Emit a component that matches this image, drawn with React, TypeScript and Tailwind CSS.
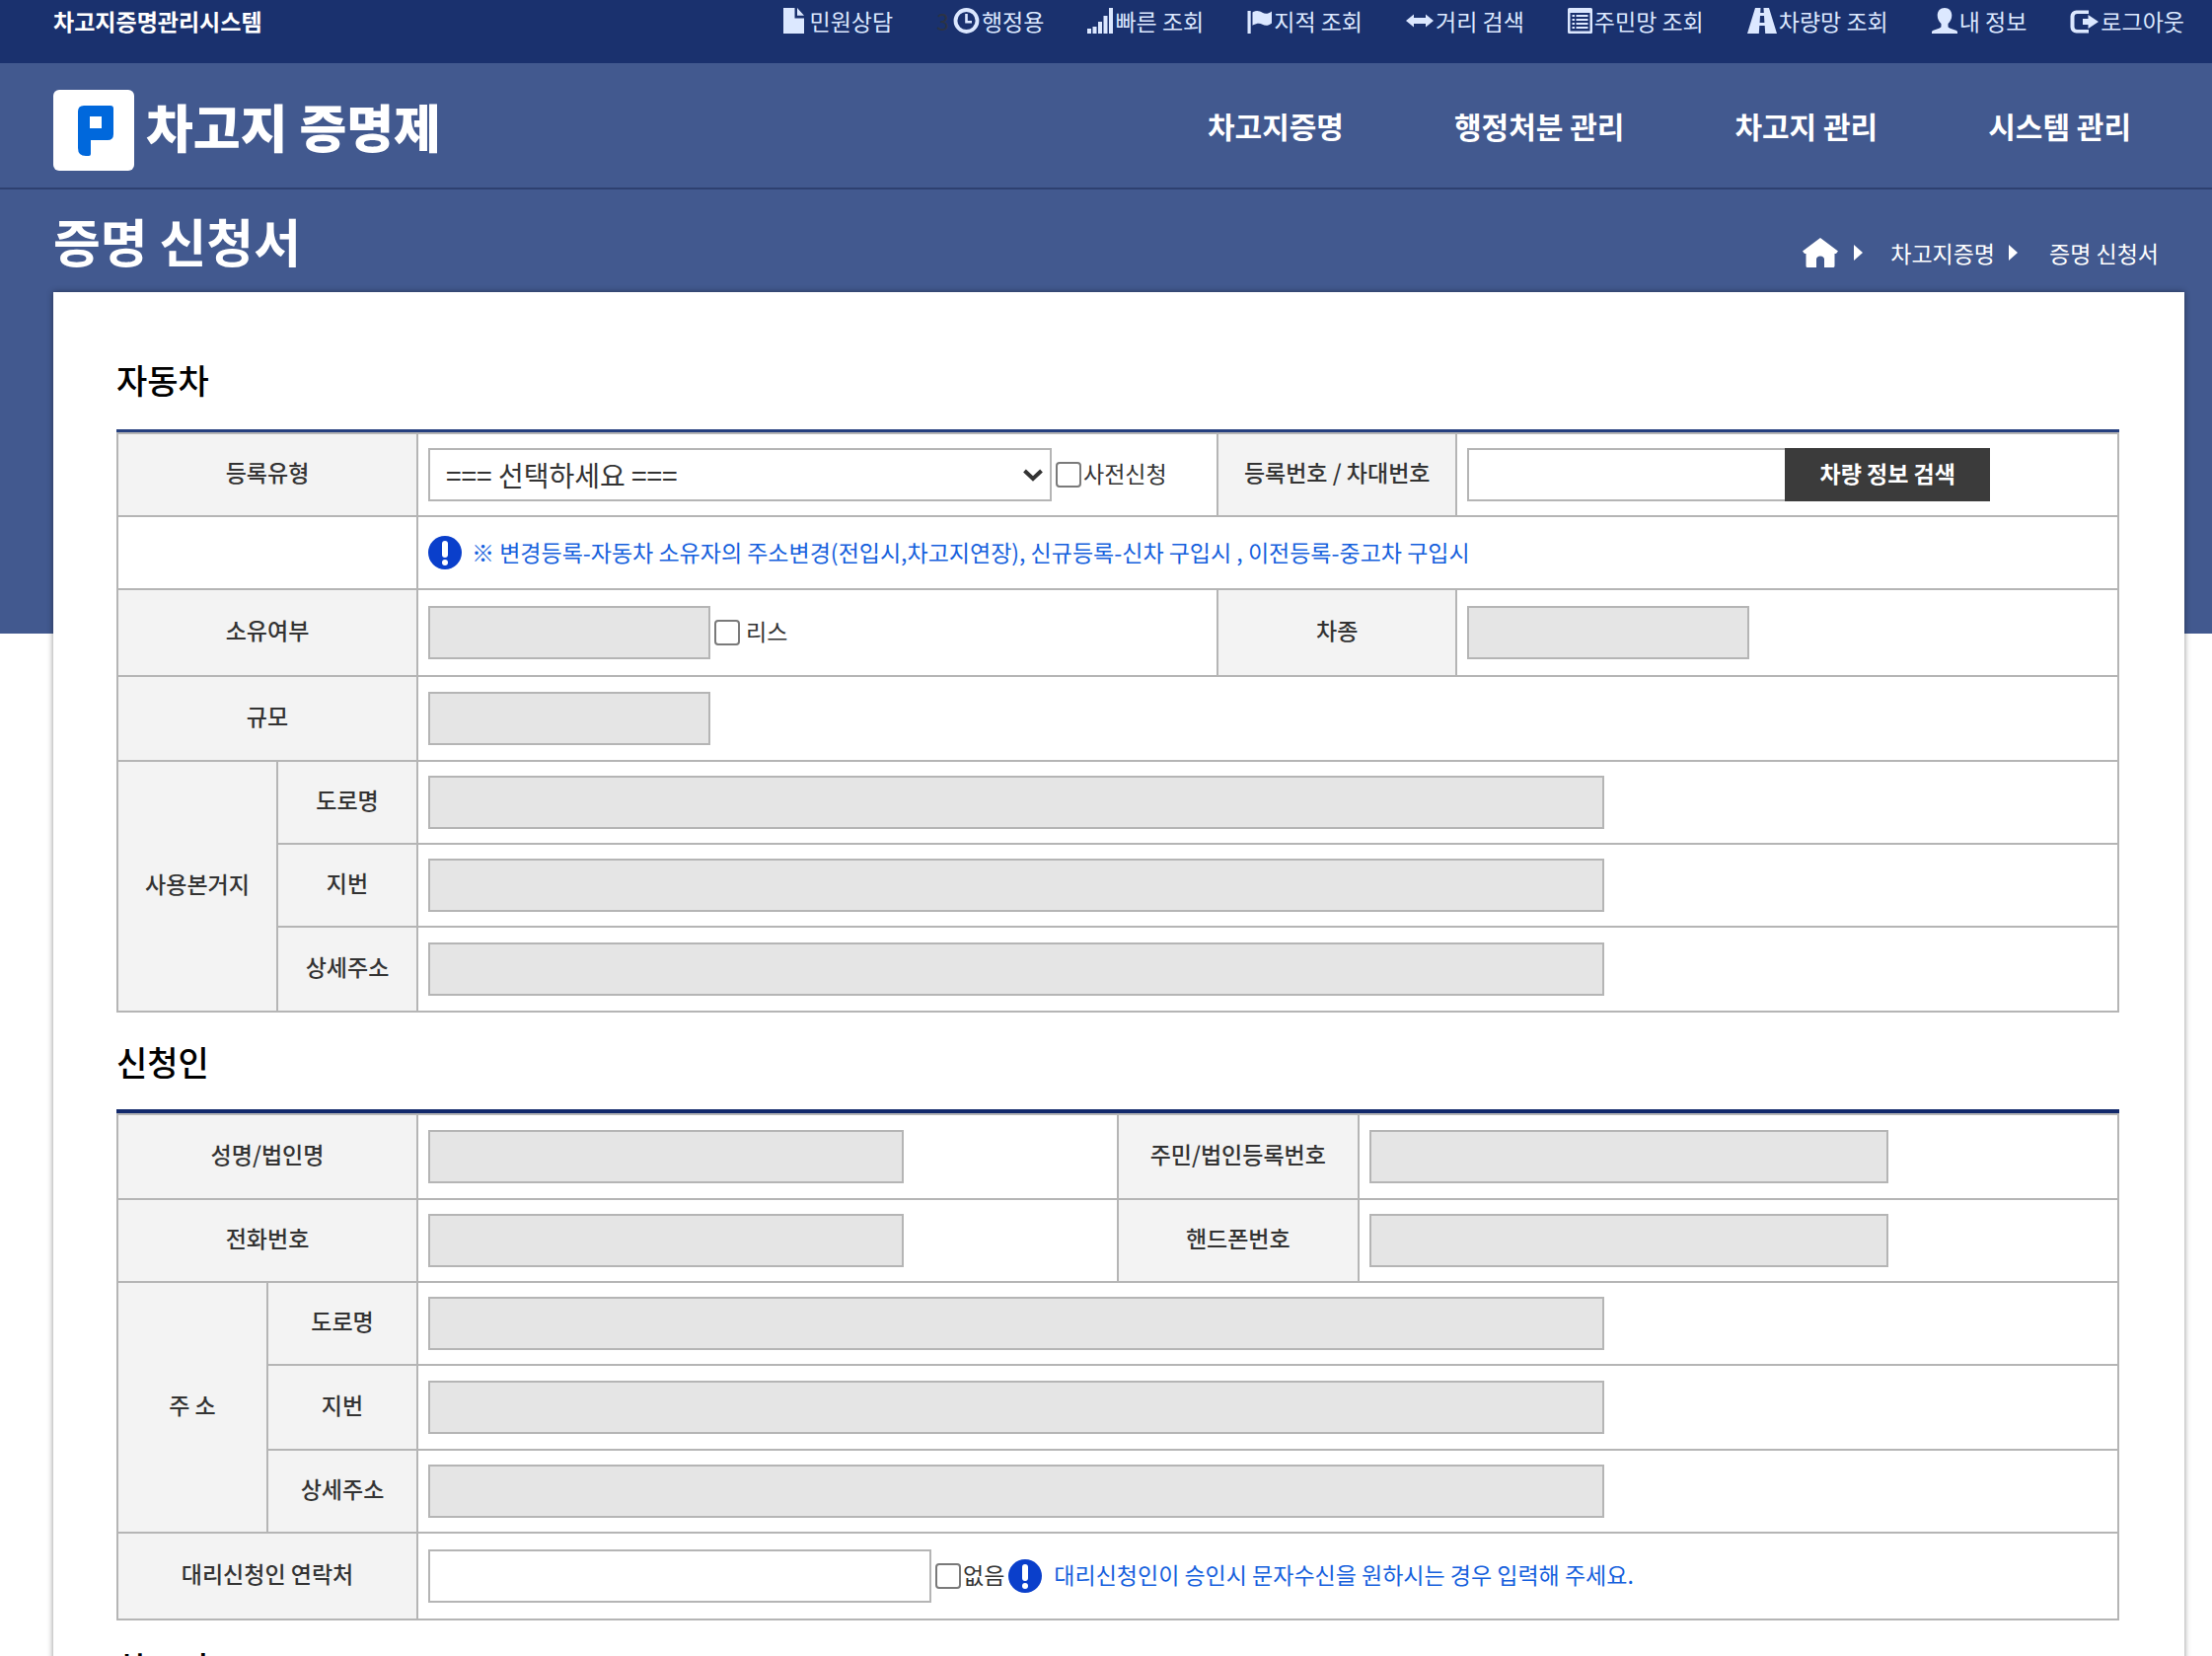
import type { ReactNode } from "react";

function FileIcon() {
  return (
    <svg width="21" height="26" viewBox="0 0 21 26" fill="currentColor" aria-hidden="true">
      <path d="M0 0h11.5v10.5H21V26H0zM14 0l7 7.8h-7z" />
    </svg>
  );
}

function ClockIcon() {
  return (
    <svg width="27" height="26" viewBox="0 0 27 26" fill="none" stroke="currentColor" aria-hidden="true">
      <circle cx="13.5" cy="13" r="11" strokeWidth="3.8" />
      <path d="M13.5 6v8.2h5.5" strokeWidth="2.6" />
    </svg>
  );
}

function SignalIcon() {
  return (
    <svg width="26" height="26" viewBox="0 0 26 26" fill="currentColor" aria-hidden="true">
      <path d="M0 21h4v5H0zM5.500 19h4v7h-4zM11 14h4v12h-4zM16.500 8h4v18h-4zM22 0h4v26h-4z" />
    </svg>
  );
}

function FlagIcon() {
  return (
    <svg width="25" height="26" viewBox="0 0 25 26" fill="currentColor" aria-hidden="true">
      <path d="M0.500 3h3.200v23H0.500zM5.500 4.500c4-2.500 7-1.500 10 .3 3 1.700 6 1.200 9.500-1.300v12c-3.500 2.800-6.500 3-9.500 1.200-3-1.700-6-1.200-10 1z" />
    </svg>
  );
}

function ArrowsIcon() {
  return (
    <svg width="28" height="26" viewBox="0 0 28 26" fill="currentColor" aria-hidden="true">
      <path d="M0 13l8-6.500v3.500h12V6.500l8 6.500-8 6.500V16H8v3.500z" />
    </svg>
  );
}

function ListIcon() {
  return (
    <svg width="25" height="26" viewBox="0 0 25 26" fill="currentColor" aria-hidden="true">
      <path
        fillRule="evenodd"
        d="M1.500 0h22A1.500 1.500 0 0 1 25 1.500v23a1.500 1.500 0 0 1-1.500 1.500h-22A1.500 1.500 0 0 1 0 24.500v-23A1.500 1.500 0 0 1 1.500 0zM2.500 5v18.500h20V5z"
      />
      <path d="M4.500 7h2.500v2H4.500zM8.500 7h12v2h-12zM4.500 11h2.500v2H4.500zM8.500 11h12v2h-12zM4.500 15h2.500v2H4.500zM8.500 15h12v2h-12zM4.500 19h2.500v2H4.500zM8.500 19h12v2h-12z" />
    </svg>
  );
}

function RoadIcon() {
  return (
    <svg width="30" height="26" viewBox="0 0 30 26" fill="currentColor" aria-hidden="true">
      <path d="M8 0h5.500l-.3 5h3.600l-.3-5H22l8 26H18.200l-.5-8h-5.400l-.5 8H0zM13 8l-.4 7h4.800L17 8z" fillRule="evenodd" />
    </svg>
  );
}

function UserIcon() {
  return (
    <svg width="26" height="26" viewBox="0 0 26 26" fill="currentColor" aria-hidden="true">
      <path d="M13 0c4.500 0 7.300 3 7.300 7.500 0 3.500-1.500 6.500-3.800 8.500v2.500c0 1 .6 1.500 1.600 1.900l6.300 2.300c1 .4 1.600 1 1.600 2V26H0v-1.300c0-1 .6-1.600 1.600-2l6.300-2.300c1-.4 1.600-.9 1.600-1.900V16c-2.300-2-3.800-5-3.800-8.500C5.700 3 8.500 0 13 0z" />
    </svg>
  );
}

function LogoutIcon() {
  return (
    <svg width="29" height="26" viewBox="0 0 29 26" fill="currentColor" aria-hidden="true">
      <path d="M19 2.500V6H7.500A3 3 0 0 0 4.500 9v10a3 3 0 0 0 3 3H19v3.500H6.500a6 6 0 0 1-6-6v-11a6 6 0 0 1 6-6z" />
      <path d="M18.500 7L29 14l-10.500 7v-4H13v-6h5.500z" />
    </svg>
  );
}

function HomeIcon() {
  return (
    <svg width="36" height="30" viewBox="0 0 36 30" fill="currentColor" aria-hidden="true">
      <path d="M18 0l18 13.500-2 2.500h-1.500v12.500a1.500 1.500 0 0 1-1.500 1.500h-9V21.500c0-1.500-1.500-3-4-3s-4 1.500-4 3V30H5a1.500 1.500 0 0 1-1.500-1.500V16H2l-2-2.500z" />
    </svg>
  );
}

function CaretIcon() {
  return (
    <svg width="9" height="16" viewBox="0 0 9 16" fill="currentColor" aria-hidden="true">
      <path d="M0 0l9 8-9 8z" />
    </svg>
  );
}

function NoticeIcon() {
  return (
    <svg className="shrink-0" width="34" height="34" viewBox="0 0 34 34" aria-hidden="true">
      <circle cx="17" cy="17" r="17" fill="#0a3fcb" />
      <rect x="14" y="5" width="6" height="17" rx="3" fill="#fff" />
      <circle cx="17" cy="27" r="3" fill="#fff" />
    </svg>
  );
}

function LogoMark() {
  return (
    <svg width="82" height="82" viewBox="0 0 82 82" aria-hidden="true">
      <rect width="82" height="82" rx="6" fill="#fff" />
      <path
        fillRule="evenodd"
        fill="#0068dc"
        d="M31 16h27q3 0 3 3v26q0 6-6 6H38v14q0 2-2 2h-3q-8 0-8-8V22q0-6 6-6zM37 27v12h12V27z"
      />
    </svg>
  );
}

const utilities: { icon: ReactNode; label: string; prefix?: string; wide?: boolean }[] = [
  { icon: <FileIcon />, label: "민원상담", wide: true },
  { icon: <ClockIcon />, label: "행정용", prefix: "3" },
  { icon: <SignalIcon />, label: "빠른 조회" },
  { icon: <FlagIcon />, label: "지적 조회" },
  { icon: <ArrowsIcon />, label: "거리 검색" },
  { icon: <ListIcon />, label: "주민망 조회" },
  { icon: <RoadIcon />, label: "차량망 조회" },
  { icon: <UserIcon />, label: "내 정보" },
  { icon: <LogoutIcon />, label: "로그아웃" },
];

const menus = ["차고지증명", "행정처분 관리", "차고지 관리", "시스템 관리"];

function Th({ children, htmlFor, colSpan, rowSpan }: { children: ReactNode; htmlFor?: string; colSpan?: number; rowSpan?: number }) {
  return (
    <th
      colSpan={colSpan}
      rowSpan={rowSpan}
      className="border-2 border-[#b5b5b5] bg-[#f3f3f3] p-0 pb-1.5 text-center align-middle font-medium whitespace-nowrap text-[#333]"
    >
      {htmlFor ? <label htmlFor={htmlFor}>{children}</label> : children}
    </th>
  );
}

function Td({ children, colSpan }: { children?: ReactNode; colSpan?: number }) {
  return (
    <td colSpan={colSpan} className="border-2 border-[#b5b5b5] px-2.5 py-0 align-middle">
      <div className="flex items-center">{children}</div>
    </td>
  );
}

function ReadOnly({ id, size }: { id: string; size: "sm" | "md" | "lg" | "xl" }) {
  const widths = {
    sm: "max-w-[286px]",
    md: "max-w-[482px]",
    lg: "max-w-[526px]",
    xl: "max-w-[1192px]",
  };
  return (
    <input
      id={id}
      type="text"
      readOnly
      className={`h-[54px] w-full border-2 border-[#b5b5b5] bg-[#e5e5e5] px-4 outline-none ${widths[size]}`}
    />
  );
}

function Check({ label, spaced }: { label: string; spaced?: boolean }) {
  return (
    <label className={`ml-1 flex shrink-0 items-center text-[#333] ${spaced ? "gap-1.5" : "gap-0.5"}`}>
      <input
        type="checkbox"
        className="size-[26px] appearance-none rounded-[4px] border-2 border-[#7a7a7a] bg-white checked:bg-[#0a3fcb]"
      />
      <span className="pb-1">{label}</span>
    </label>
  );
}

function VehicleTable() {
  return (
    <div className="border-t-[3px] border-[#26407f]">
      <table className="w-full table-fixed border-collapse">
        <colgroup>
          <col className="w-[162px]" />
          <col className="w-[142px]" />
          <col className="w-[40%]" />
          <col className="w-[242px]" />
          <col />
        </colgroup>
        <tbody>
          <tr className="h-[84px]">
            <Th colSpan={2} htmlFor="reg-type">등록유형</Th>
            <Td>
              <div className="relative w-full max-w-[632px]">
                <select
                  id="reg-type"
                  className="h-[54px] w-full appearance-none border-2 border-[#b5b5b5] bg-white pr-12 pl-4 text-[28px] leading-[46px] text-[#333] outline-none"
                >
                  <option>=== 선택하세요 ===</option>
                </select>
                <svg
                  className="pointer-events-none absolute top-[21px] right-[9px]"
                  width="20"
                  height="13"
                  viewBox="0 0 20 13"
                  fill="none"
                  stroke="#333"
                  strokeWidth="4"
                  aria-hidden="true"
                >
                  <path d="M1.500 2l8.500 8 8.500-8" />
                </svg>
              </div>
              <Check label="사전신청" />
            </Td>
            <Th htmlFor="reg-no">등록번호 / 차대번호</Th>
            <Td>
              <input
                id="reg-no"
                type="text"
                className="h-[54px] w-full max-w-[322px] border-2 border-r-0 border-[#b5b5b5] bg-white px-4 outline-none"
              />
              <button type="button" className="h-[54px] w-52 shrink-0 bg-[#3b3b3b] pb-1 font-bold text-white">
                차량 정보 검색
              </button>
            </Td>
          </tr>
          <tr className="h-[74px]">
            <td colSpan={2} className="border-2 border-[#b5b5b5]" />
            <Td colSpan={3}>
              <NoticeIcon />
              <p className="ml-2.5 pb-0.5 text-[#1560dd]">
                ※ 변경등록-자동차 소유자의 주소변경(전입시,차고지연장), 신규등록-신차 구입시 , 이전등록-중고차 구입시
              </p>
            </Td>
          </tr>
          <tr className="h-[88px]">
            <Th colSpan={2} htmlFor="owner">소유여부</Th>
            <Td>
              <ReadOnly id="owner" size="sm" />
              <Check label="리스" spaced />
            </Td>
            <Th htmlFor="car-kind">차종</Th>
            <Td>
              <ReadOnly id="car-kind" size="sm" />
            </Td>
          </tr>
          <tr className="h-[86px]">
            <Th colSpan={2} htmlFor="scale">규모</Th>
            <Td colSpan={3}>
              <ReadOnly id="scale" size="sm" />
            </Td>
          </tr>
          <tr className="h-[84px]">
            <Th rowSpan={3}>사용본거지</Th>
            <Th htmlFor="base-road">도로명</Th>
            <Td colSpan={3}>
              <ReadOnly id="base-road" size="xl" />
            </Td>
          </tr>
          <tr className="h-[84px]">
            <Th htmlFor="base-lot">지번</Th>
            <Td colSpan={3}>
              <ReadOnly id="base-lot" size="xl" />
            </Td>
          </tr>
          <tr className="h-[86px]">
            <Th htmlFor="base-detail">상세주소</Th>
            <Td colSpan={3}>
              <ReadOnly id="base-detail" size="xl" />
            </Td>
          </tr>
        </tbody>
      </table>
    </div>
  );
}

function ApplicantTable() {
  return (
    <div className="border-t-[4px] border-[#12296b]">
      <table className="w-full table-fixed border-collapse">
        <colgroup>
          <col className="w-[152px]" />
          <col className="w-[152px]" />
          <col className="w-[35%]" />
          <col className="w-[244px]" />
          <col />
        </colgroup>
        <tbody>
          <tr className="h-[86px]">
            <Th colSpan={2} htmlFor="name">성명/법인명</Th>
            <Td>
              <ReadOnly id="name" size="md" />
            </Td>
            <Th htmlFor="corp-no">주민/법인등록번호</Th>
            <Td>
              <ReadOnly id="corp-no" size="lg" />
            </Td>
          </tr>
          <tr className="h-[84px]">
            <Th colSpan={2} htmlFor="phone">전화번호</Th>
            <Td>
              <ReadOnly id="phone" size="md" />
            </Td>
            <Th htmlFor="mobile">핸드폰번호</Th>
            <Td>
              <ReadOnly id="mobile" size="lg" />
            </Td>
          </tr>
          <tr className="h-[84px]">
            <Th rowSpan={3}>주 소</Th>
            <Th htmlFor="addr-road">도로명</Th>
            <Td colSpan={3}>
              <ReadOnly id="addr-road" size="xl" />
            </Td>
          </tr>
          <tr className="h-[86px]">
            <Th htmlFor="addr-lot">지번</Th>
            <Td colSpan={3}>
              <ReadOnly id="addr-lot" size="xl" />
            </Td>
          </tr>
          <tr className="h-[84px]">
            <Th htmlFor="addr-detail">상세주소</Th>
            <Td colSpan={3}>
              <ReadOnly id="addr-detail" size="xl" />
            </Td>
          </tr>
          <tr className="h-[88px]">
            <Th colSpan={2} htmlFor="agent">대리신청인 연락처</Th>
            <Td colSpan={3}>
              <input
                id="agent"
                type="text"
                className="h-[54px] w-full max-w-[510px] border-2 border-[#b5b5b5] bg-white px-4 outline-none"
              />
              <Check label="없음" />
              <span className="ml-1 flex items-center gap-3 text-[#1560dd]">
                <NoticeIcon />
                <span className="pb-1">대리신청인이 승인시 문자수신을 원하시는 경우 입력해 주세요.</span>
              </span>
            </Td>
          </tr>
        </tbody>
      </table>
    </div>
  );
}

export default function App() {
  return (
    <div className="h-screen overflow-hidden bg-white font-['Noto_Sans_CJK_KR',sans-serif] text-[23px] leading-8">
      <div className="bg-[#42598f] pb-[346px] text-white">
        <div className="flex h-16 items-center justify-between bg-[#1a316e] pr-7 pb-[22px] pl-[54px]">
          <strong className="font-bold">차고지증명관리시스템</strong>
          <ul className="flex gap-11 text-[#dce8ff]">
            {utilities.map((u) => (
              <li key={u.label} className="flex items-center">
                {u.prefix && <span className="mr-1 text-[#2c3344]">{u.prefix}</span>}
                <a href="#" className={`flex items-center ${u.wide ? "gap-1.5" : "gap-0.5"}`}>
                  {u.icon}
                  {u.label}
                </a>
              </li>
            ))}
          </ul>
        </div>
        <header className="flex h-32 items-center justify-between border-b-2 border-[#2e4070] pt-2.5 pr-[82px] pl-[54px]">
          <a href="#" className="flex items-center gap-3">
            <LogoMark />
            <span className="pb-2 text-[52px] leading-[60px] font-black">차고지 증명제</span>
          </a>
          <nav className="flex gap-28 pb-2.5 text-[30px] leading-10 font-bold">
            {menus.map((m) => (
              <a key={m} href="#">
                {m}
              </a>
            ))}
          </nav>
        </header>
        <div className="flex h-[104px] items-center justify-between pr-[54px] pl-[54px]">
          <h1 className="text-[52px] leading-[60px] font-bold">증명 신청서</h1>
          <nav className="flex items-center pt-6">
            <a href="#" aria-label="홈">
              <HomeIcon />
            </a>
            <span className="mr-7 ml-4">
              <CaretIcon />
            </span>
            <a href="#">차고지증명</a>
            <span className="mr-8 ml-3.5">
              <CaretIcon />
            </span>
            <a href="#">증명 신청서</a>
          </nav>
        </div>
      </div>
      <main className="-mt-[346px] mr-7 ml-[54px] bg-white pt-[69px] pr-[66px] pb-20 pl-16 shadow-[0_0_6px_rgba(0,0,0,0.45)]">
        <h2 className="mb-[30px] text-[34px] leading-10 font-medium text-black">자동차</h2>
        <VehicleTable />
        <h2 className="mt-[30px] mb-7 text-[34px] leading-10 font-medium text-black">신청인</h2>
        <ApplicantTable />
        <h2 className="mt-7 mb-7 text-[34px] leading-10 font-medium text-black">차고지</h2>
      </main>
    </div>
  );
}
